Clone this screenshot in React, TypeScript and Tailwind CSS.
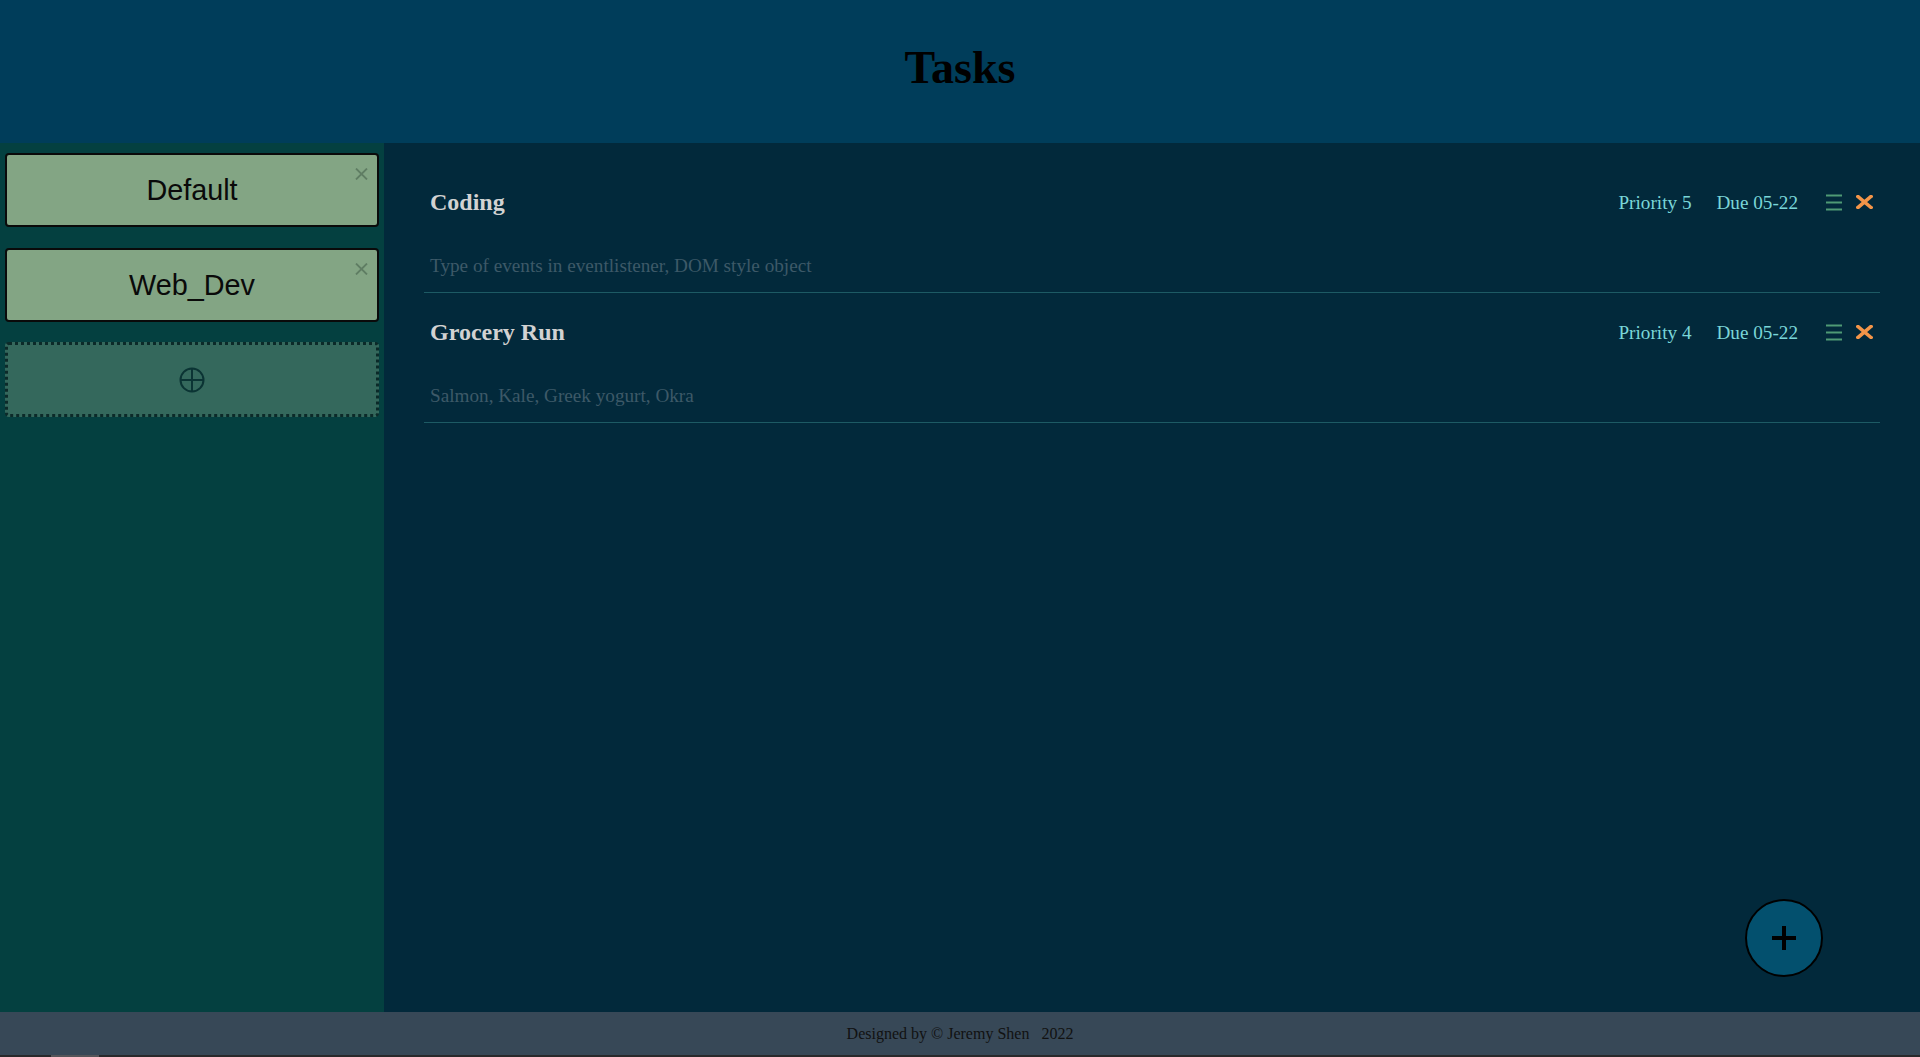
import React from 'react'

interface Task {
  title: string
  description: string
  priority: number
  due: string
}

const TASKS: Task[] = [
  { title: 'Coding', description: 'Type of events in eventlistener, DOM style object', priority: 5, due: '05-22' },
  { title: 'Grocery Run', description: 'Salmon, Kale, Greek yogurt, Okra', priority: 4, due: '05-22' },
]

const PROJECTS = ['Default', 'Web_Dev']

function ProjectCard({ name }: { name: string }) {
  return (
    <div className="relative flex h-[74px] items-center justify-center rounded-[4px] border-2 border-[#0a0a0a] bg-[#83a584]">
      <span className="font-['Liberation_Sans',Arial,sans-serif] text-[28.8px] leading-none text-[#0a0a0a]">{name}</span>
      {/* remove project */}
      <svg className="absolute right-[9px] top-[13px]" width="13" height="12" viewBox="0 0 13 12" aria-label="Remove project">
        <path d="M1 0.5 L12 11.5 M12 0.5 L1 11.5" stroke="#5f7d63" strokeWidth="1.8" fill="none" />
      </svg>
    </div>
  )
}

function TaskRow({ task }: { task: Task }) {
  return (
    <div className="border-b border-[#1d5a64] px-[6px] pt-[27px] pb-[17px] font-['Liberation_Serif','Times_New_Roman',serif]">
      <div className="flex h-[24px] items-center justify-between">
        <h3 className="text-[24px] font-bold leading-[24px] text-[#d2d2d2]">{task.title}</h3>
        <div className="flex items-center pr-[1px] text-[19.2px] leading-[19px] text-[#7ad6d8]">
          <span>Priority {task.priority}</span>
          <span className="ml-[25px]">Due {task.due}</span>
          {/* edit */}
          <svg className="ml-[28px]" width="16" height="17" viewBox="0 0 16 17" aria-label="Edit">
            <path d="M0 1.5 H16 M0 8.5 H16 M0 15.5 H16" stroke="#4e9a75" strokeWidth="2.2" fill="none" />
          </svg>
          {/* delete */}
          <svg className="ml-[14px]" width="17" height="14" viewBox="0 0 17 14" aria-label="Delete">
            <path d="M2 1.5 L15 12.5 M15 1.5 L2 12.5" stroke="#f39549" strokeWidth="3.6" strokeLinecap="square" fill="none" />
          </svg>
        </div>
      </div>
      <p className="mt-[42px] text-[19.2px] leading-[19px] text-[#3d5968]">{task.description}</p>
    </div>
  )
}

export default function App() {
  return (
    <div className="flex h-[1057px] w-full flex-col overflow-hidden">
      {/* Header */}
      <header className="flex h-[143px] shrink-0 items-center justify-center bg-[#003d5a] pb-[8px]">
        <h1 className="font-['Liberation_Serif','Times_New_Roman',serif] text-[46px] font-bold leading-[46px] text-black">Tasks</h1>
      </header>

      <div className="flex min-h-0 flex-1">
        {/* Projects sidebar */}
        <aside className="flex w-[384px] shrink-0 flex-col gap-[21px] bg-[#044040] px-[5px] pt-[10px]">
          {PROJECTS.map(p => (
            <ProjectCard key={p} name={p} />
          ))}
          <button className="-mt-[1px] flex h-[75px] items-center justify-center rounded-[4px] border-[3px] border-dotted border-[#0c2a29] bg-[#34685c]" aria-label="Add project">
            <svg width="26" height="26" viewBox="0 0 26 26">
              <circle cx="13" cy="13" r="11.5" stroke="#0b3434" strokeWidth="2" fill="none" />
              <path d="M13 1.5 V24.5 M1.5 13 H24.5" stroke="#0b3434" strokeWidth="2" />
            </svg>
          </button>
        </aside>

        {/* Task list */}
        <main className="relative flex-1 bg-[#02293b] px-[40px] pt-[20px]">
          {TASKS.map(t => (
            <TaskRow key={t.title} task={t} />
          ))}

          <button
            className="absolute bottom-[35px] right-[97px] flex h-[78px] w-[78px] items-center justify-center rounded-full border-2 border-black bg-[#03506e]"
            aria-label="Add task"
          >
            <svg width="24" height="24" viewBox="0 0 24 24">
              <path d="M12 0 V24 M0 12 H24" stroke="#000" strokeWidth="4" />
            </svg>
          </button>
        </main>
      </div>

      {/* Footer */}
      <footer className="flex h-[43px] shrink-0 items-center justify-center bg-[#374857]">
        <p className="whitespace-pre font-['Liberation_Serif','Times_New_Roman',serif] text-[16px] text-[#111]">Designed by © Jeremy Shen   2022</p>
      </footer>
      <div className="flex h-[2px] shrink-0 bg-[#29292b]">
        <div className="ml-[51px] w-[48px] bg-[#555559]" />
      </div>
    </div>
  )
}
